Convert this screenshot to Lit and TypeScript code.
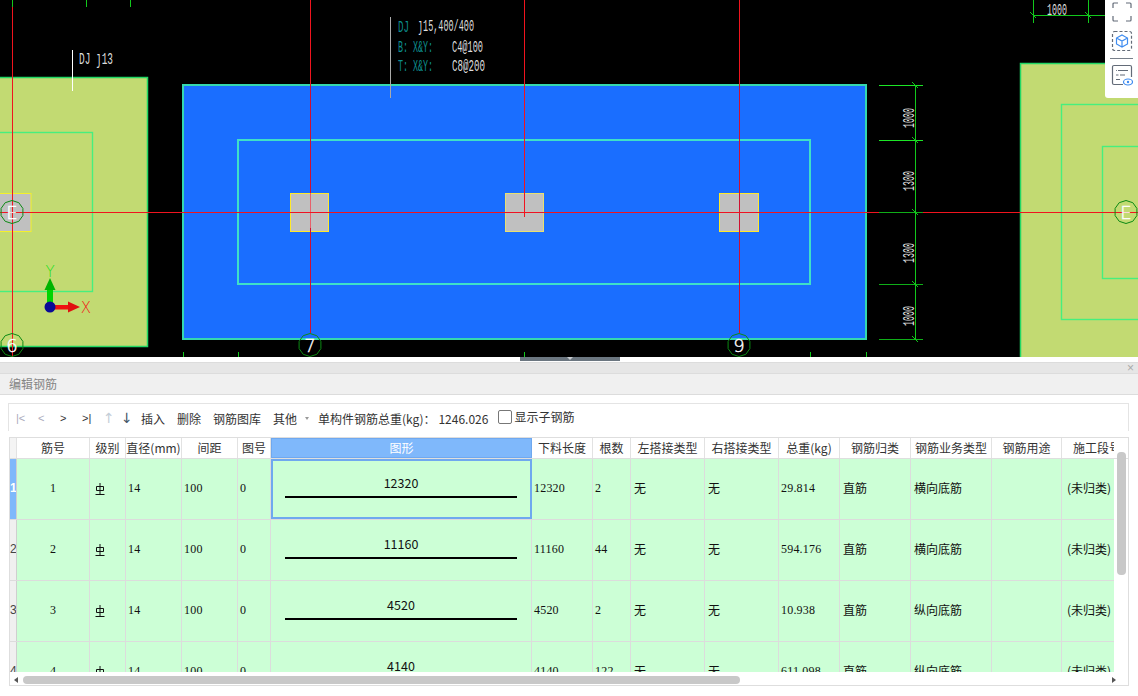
import { LitElement, css, html, svg } from 'lit';
import { customElement } from 'lit/decorators.js';

type Bar = { no: number; len: number; count: number; weight: string; kind: string };

const bars: Bar[] = [
  { no: 1, len: 12320, count: 2, weight: '29.814', kind: '横向底筋' },
  { no: 2, len: 11160, count: 44, weight: '594.176', kind: '横向底筋' },
  { no: 3, len: 4520, count: 2, weight: '10.938', kind: '纵向底筋' },
  { no: 4, len: 4140, count: 122, weight: '611.098', kind: '纵向底筋' },
];

const headers = ['筋号', '级别', '直径(mm)', '间距', '图号', '图形', '下料长度', '根数', '左搭接类型', '右搭接类型', '总重(kg)', '钢筋归类', '钢筋业务类型', '钢筋用途', '施工段号'];

const TEAL = '#0d8f8f';
const PALE = '#ddd';

// axis bubble, the CAD draws it as a coarse polygon
function bubble(cx: number, cy: number, label: string, fs = 18) {
  const pts = Array.from({ length: 10 }, (_, i) => {
    const a = (Math.PI * 2 * i) / 10 - Math.PI / 2;
    return `${(cx + 11.5 * Math.cos(a)).toFixed(1)},${(cy + 11.5 * Math.sin(a)).toFixed(1)}`;
  }).join(' ');
  return svg`<polygon points=${pts} fill="none" stroke="#0c8a14" stroke-width="1"></polygon>
    <text x=${cx} y=${cy + 6.5} text-anchor="middle" font-size=${fs} fill="#fff" stroke="#fff" stroke-width="0.4" class="axis">${label}</text>`;
}

// CAD text is tall and narrow: squeeze the mono font to the width it has in the drawing
function cadText(x: number, y: number, width: number, label: string, fill = PALE) {
  const sx = width / (label.length * 0.6 * 17);
  return svg`<text transform="translate(${x} ${y}) scale(${sx.toFixed(3)} 1)" class="cad" font-size="17" fill=${fill}>${label}</text>`;
}

function dimText(y: number, label: string) {
  const sx = 20 / (label.length * 0.6 * 17);
  return svg`<text transform="translate(914 ${y}) rotate(-90) scale(${sx.toFixed(3)} 1)" text-anchor="middle" font-size="17" fill=${PALE} class="cad">${label}</text>`;
}

function column(x: number, w: number, stroke: string) {
  return svg`<rect x=${x + 0.5} y="193.5" width=${w} height="38" fill="#c0c0c0" stroke=${stroke}></rect>`;
}

// small slash where a witness line meets the dimension line
function tick(x: number, y: number) {
  return svg`<path d="M${x - 3} ${y - 3}L${x + 3} ${y + 3}" stroke="#12c81c" fill="none"></path>`;
}

@customElement('app-root')
export class AppRoot extends LitElement {
  static styles = css`
    :host {
      display: block;
      position: relative;
      width: 1138px;
      height: 696px;
      overflow: hidden;
      background: #fff;
      font-family: 'Noto Sans CJK SC', 'Liberation Sans', sans-serif;
      font-size: 12px;
      color: #333;
    }
    .canvas { display: block; width: 1138px; height: 357px; background: #000; }
    .canvas .cad { font-family: 'Liberation Mono', monospace; }
    .canvas .axis { font-family: 'DejaVu Sans', sans-serif; font-weight: 200; }
    .tools {
      position: absolute;
      top: 0;
      right: 0;
      width: 33px;
      height: 98px;
      box-sizing: border-box;
      background: #fff;
      border-bottom-left-radius: 3px;
      display: flex;
      flex-direction: column;
      align-items: center;
    }
    .tools svg { display: block; width: 22px; height: 22px; }
    .tools .first { margin-top: 1px; }
    .tools .second { margin-top: 7px; }
    .tools hr { width: 23px; height: 1px; border: 0; margin: 6px 0 5px; background: #777f8a; }
    .splitter { height: 4px; display: flex; justify-content: center; padding-left: 2px; }
    .handle {
      width: 100px;
      height: 4px;
      background: #6b7680;
      display: flex;
      justify-content: center;
    }
    .handle i {
      width: 0;
      height: 0;
      border: 3px solid transparent;
      border-top-color: #c8ccd0;
      border-bottom: 0;
    }
    .strip {
      margin-top: 1px;
      height: 10px;
      background: #e6e6e6;
      border-top: 1px solid #dcdcdc;
      border-bottom: 1px solid #dcdcdc;
      display: flex;
      justify-content: flex-end;
      align-items: center;
      padding-right: 4px;
      color: #aaa;
      font: 12px 'Liberation Sans', sans-serif;
    }
    .title {
      height: 20px;
      background: #f0f0f0;
      border-bottom: 1px solid #dcdcdc;
      padding-left: 9px;
      line-height: 19px;
      color: #858585;
    }
    .toolbar {
      margin: 8px 9px 0 8px;
      height: 28px;
      box-sizing: border-box;
      border: 1px solid #e4e4e4;
      border-bottom: 0;
      display: flex;
      align-items: center;
      padding: 1px 0 0 7px;
      white-space: nowrap;
    }
    .toolbar span { flex: none; }
    .nav { width: 22px; font-size: 11px; font-family: 'Liberation Sans', sans-serif; }
    .nav.wide { width: 21px; }
    .off { color: #aab; }
    .arrow { width: 18px; font-size: 14px; font-family: 'DejaVu Sans', sans-serif; color: #456; }
    .arrow.short { width: 20px; }
    .arrow.off { color: #c5ced8; }
    .act { margin-right: 12px; }
    .caret {
      width: 0;
      height: 0;
      margin: 1px 9px 0 -4px;
      border: 2.5px solid transparent;
      border-top: 3px solid #999;
      border-bottom: 0;
    }
    .weight { margin: 0 10px 0 3px; }
    .check {
      width: 12px;
      height: 12px;
      margin: -3px 2px 0 0;
      border: 1px solid #777;
      border-radius: 2px;
      background: #fff;
    }
    .toggle { margin-top: -3px; }
    .table {
      position: relative;
      margin: 6px 9px 0 9px;
      height: 249px;
      box-sizing: border-box;
      border: 1px solid #dedede;
      overflow: hidden;
    }
    .row {
      display: grid;
      grid-template-columns: 7px 73px 36px 56px 56px 33px 261px 61px 38px 74px 74px 61px 71px 81px 70px 52px;
    }
    .head { height: 20px; border-bottom: 1px solid #dedede; box-sizing: content-box; background: #fff; }
    .head > div {
      border-right: 1px solid #e2e2e2;
      text-align: center;
      line-height: 20px;
      white-space: nowrap;
      overflow: hidden;
    }
    .head .last { text-align: left; padding-left: 11px; border: 0; }
    .head .stub { background: #f4f4f4; }
    .head .picked { background: #7fb8fb; color: #fff; border: 0; box-shadow: inset 0 0 0 1px #6fa8ef; }
    .rows { width: 1104px; height: 213px; overflow: hidden; }
    .data { height: 60px; border-bottom: 1px solid #dcdcdc; background: #ccffd6; color: #111; }
    .data > div {
      border-right: 1px solid #dcdcdc;
      line-height: 58px;
      padding-left: 3px;
      white-space: nowrap;
      overflow: hidden;
    }
    .data .num { font-family: 'Liberation Serif', serif; padding-left: 2px; letter-spacing: 0.2px; }
    .data .mid { text-align: center; padding: 0; }
    .data .gap { padding-left: 5px; }
    .data .end { border-right: 0; }
    .data .stub {
      background: #f0f0f0;
      color: #444;
      padding: 0;
      text-align: center;
      font-family: 'Liberation Sans', sans-serif;
      border-right: 1px solid #cfcfcf;
    }
    .data .stub.on { background: #7fb8fb; color: #fff; font-weight: bold; }
    .data .grade { display: flex; align-items: center; padding-left: 5px; height: 60px; box-sizing: border-box; }
    .grade svg { display: block; width: 10px; height: 12px; }
    .data .shape {
      display: flex;
      flex-direction: column;
      align-items: center;
      padding: 14px 0 0;
      box-sizing: border-box;
      line-height: 20px;
      font-size: 12.5px;
    }
    .shape b { display: block; width: 232px; height: 2px; margin-top: 3px; background: #000; }
    .data .shape.on { outline: 2px solid #6fa8ef; outline-offset: -2px; }
    .hbar { display: flex; align-items: center; height: 14px; padding-top: 1px; box-sizing: border-box; }
    .tri-l, .tri-r { width: 0; height: 0; border: 3.5px solid transparent; }
    .tri-l { margin-left: 4px; border-left: 0; border-right: 4px solid #555; }
    .tri-r { margin-left: 372px; border-right: 0; border-left: 4px solid #555; }
    .thumb { width: 717px; height: 8px; margin-left: 5px; border-radius: 4px; background: #c8c8c8; }
    .vbar {
      position: absolute;
      left: 1107px;
      top: 14px;
      width: 9px;
      height: 123px;
      border-radius: 4px;
      background: #c8c8c8;
    }
  `;

  private renderCanvas() {
    return html`<svg class="canvas" viewBox="0 0 1138 357">
      <!-- left footing -->
      <rect x="-5" y="77.5" width="152.5" height="269" fill="#c2da72" stroke="#22d765" stroke-width="1.5"></rect>
      <rect x="-5" y="132.5" width="97.5" height="159" fill="none" stroke="#46ef7e" stroke-width="1.4"></rect>
      <rect x="-5" y="193.5" width="36" height="38" fill="#c0c0c0" stroke="#f4f02a"></rect>
      <!-- middle footing -->
      <rect x="183" y="85" width="683" height="254" fill="#1a6eff" stroke="#35d8ae" stroke-width="2"></rect>
      <rect x="238" y="140" width="572" height="144" fill="none" stroke="#3fe0c8" stroke-width="2"></rect>
      ${column(290, 38, '#ffe92a')}${column(505, 38, '#e8e070')}${column(719, 39, '#ffe92a')}
      <!-- right footing -->
      <rect x="1020.5" y="63.5" width="130" height="300" fill="#c2da72" stroke="#22d765" stroke-width="1.5"></rect>
      <rect x="1061.5" y="104.5" width="90" height="215" fill="none" stroke="#46ef7e" stroke-width="1.4"></rect>
      <rect x="1102.5" y="146.5" width="60" height="132" fill="none" stroke="#46ef7e" stroke-width="1.4"></rect>
      <!-- axes -->
      <g stroke="#f0141e" stroke-width="1" shape-rendering="crispEdges">
        <line x1="12.5" y1="7" x2="12.5" y2="357"></line>
        <line x1="310.5" y1="0" x2="310.5" y2="333" stroke="#d01030"></line>
        <line x1="310.5" y1="193" x2="310.5" y2="228" stroke="#e8606a"></line>
        <line x1="524.5" y1="0" x2="524.5" y2="217"></line>
        <line x1="739.5" y1="0" x2="739.5" y2="333" stroke="#d01030"></line>
        <line x1="739.5" y1="0" x2="739.5" y2="85"></line>
        <line x1="310.5" y1="0" x2="310.5" y2="85"></line>
        <line x1="0" y1="212.5" x2="1138" y2="212.5"></line>
      </g>
      ${bubble(12, 212, 'E')}${bubble(12, 345, '6')}${bubble(310, 345, '7')}${bubble(739, 345, '9')}${bubble(1126, 212, 'E')}
      <!-- dimension chain -->
      <g stroke="#12c81c" stroke-width="1" shape-rendering="crispEdges">
        <line x1="915.5" y1="85" x2="915.5" y2="339"></line>
        <line x1="879" y1="85.5" x2="923" y2="85.5" stroke="#1ce626"></line>
        <line x1="879" y1="140.5" x2="923" y2="140.5" stroke="#1ce626"></line>
        <line x1="879" y1="212.5" x2="923" y2="212.5" stroke="#0fae18"></line>
        <line x1="879" y1="284.5" x2="923" y2="284.5" stroke="#0fae18"></line>
        <line x1="879" y1="339.5" x2="923" y2="339.5" stroke="#0fae18"></line>
        <line x1="1033" y1="15.5" x2="1105" y2="15.5"></line>
        <line x1="1033.5" y1="0" x2="1033.5" y2="23"></line>
        <line x1="1088.5" y1="0" x2="1088.5" y2="23"></line>
        <line x1="12.5" y1="0" x2="12.5" y2="7"></line>
        <line x1="86.5" y1="0" x2="86.5" y2="7"></line>
        <line x1="130.5" y1="0" x2="130.5" y2="7"></line>
        <line x1="183.5" y1="352" x2="183.5" y2="357"></line>
        <line x1="238.5" y1="352" x2="238.5" y2="357"></line>
        <line x1="524.5" y1="352" x2="524.5" y2="357"></line>
        <line x1="810.5" y1="352" x2="810.5" y2="357"></line>
        <line x1="866.5" y1="352" x2="866.5" y2="357"></line>
      </g>
      ${tick(915, 85)}${tick(915, 140)}${tick(915, 212)}${tick(915, 284)}${tick(915, 339)}${tick(1033, 15)}${tick(1088, 15)}
      ${dimText(118, '1000')}${dimText(181, '1300')}${dimText(253, '1300')}${dimText(316, '1000')}
      ${cadText(1047, 15, 20, '1000')}
      <!-- labels -->
      <line x1="72.5" y1="50" x2="72.5" y2="91" stroke="#fff"></line>
      ${cadText(79, 64, 34, 'DJ ȷ13')}
      <line x1="390.5" y1="17" x2="390.5" y2="98" stroke="#aaa"></line>
      ${cadText(398, 32, 11, 'DJ', TEAL)}
      ${cadText(418, 31, 56, 'ȷ15,400/400')}
      ${cadText(398, 52, 35, 'B: X&Y:', TEAL)}
      ${cadText(452, 52, 31, 'C4@100')}
      ${cadText(398, 71, 35, 'T: X&Y:', TEAL)}
      ${cadText(452, 71, 33, 'C8@200')}
      <!-- coordinate gizmo -->
      <rect x="47" y="289" width="6" height="18" fill="#00d400"></rect>
      <polygon points="50,278 55.5,290 44.5,290" fill="#00b400"></polygon>
      <rect x="50" y="305" width="19" height="4.5" fill="#f01010"></rect>
      <polygon points="80,307 68,301.5 68,312.5" fill="#e01010"></polygon>
      <circle cx="50" cy="307" r="5.5" fill="#0a0a96"></circle>
      <text x="50" y="277" text-anchor="middle" font-size="15" fill="#22e022" class="axis">Y</text>
      <text x="86" y="313" text-anchor="middle" font-size="15" fill="#f01818" class="axis">X</text>
    </svg>`;
  }

  private renderTools() {
    return html`<div class="tools">
      <svg class="first" viewBox="0 0 22 22" fill="none" stroke="#636b78" stroke-width="1.2">
        <path d="M2 7V3a1 1 0 0 1 1-1h4M15 2h4a1 1 0 0 1 1 1v4M20 15v4a1 1 0 0 1-1 1h-4M7 20H3a1 1 0 0 1-1-1v-4"></path>
      </svg>
      <svg class="second" viewBox="0 0 22 22" fill="none" stroke-width="1.2">
        <rect x="1.5" y="1.5" width="19" height="19" rx="2" stroke="#636b78" stroke-dasharray="3 2"></rect>
        <path d="M11 5l5.5 3v6L11 17l-5.5-3V8zM5.5 8l5.5 3 5.5-3M11 11v6" stroke="#3f8cf0"></path>
      </svg>
      <hr />
      <svg viewBox="0 0 22 22" fill="none" stroke="#636b78" stroke-width="1.2">
        <path d="M12 20.5H3a1.5 1.5 0 0 1-1.5-1.5V3A1.5 1.5 0 0 1 3 1.5h16A1.5 1.5 0 0 1 20.5 3v10"></path>
        <path d="M7 6.5h10M5 6.5h.8M9 11h5M5 11h2.500M5 15.500h4"></path>
        <ellipse cx="17" cy="18" rx="4.5" ry="3" stroke="#3f8cf0"></ellipse>
        <circle cx="17" cy="18" r="1.2" fill="#3f8cf0" stroke="none"></circle>
      </svg>
    </div>`;
  }

  private renderRow(b: Bar, first: boolean) {
    return html`<div class="row data">
      <div class="stub ${first ? 'on' : ''}">${b.no}</div>
      <div class="num mid">${b.no}</div>
      <div class="grade">
        <svg viewBox="0 0 10 12" fill="none" stroke="#111" stroke-width="1">
          <path d="M5 0v11.5M.5 11.5h9M1.5 3.5h7v4h-7z"></path>
        </svg>
      </div>
      <div class="num">14</div>
      <div class="num">100</div>
      <div class="num">0</div>
      <div class="shape ${first ? 'on' : ''}">${b.len}<b></b></div>
      <div class="num">${b.len}</div>
      <div class="num">${b.count}</div>
      <div>无</div>
      <div>无</div>
      <div class="num">${b.weight}</div>
      <div>直筋</div>
      <div>${b.kind}</div>
      <div></div>
      <div class="gap end">(未归类)</div>
    </div>`;
  }

  render() {
    return html`
      ${this.renderCanvas()}${this.renderTools()}
      <div class="splitter"><div class="handle"><i></i></div></div>
      <div class="strip">×</div>
      <div class="title">编辑钢筋</div>
      <div class="toolbar">
        <span class="nav off">|&lt;</span>
        <span class="nav off">&lt;</span>
        <span class="nav">&gt;</span>
        <span class="nav wide">&gt;|</span>
        <span class="arrow off">↑</span>
        <span class="arrow short">↓</span>
        <span class="act">插入</span>
        <span class="act">删除</span>
        <span class="act">钢筋图库</span>
        <span class="act">其他</span>
        <span class="caret"></span>
        <span>单构件钢筋总重(kg)：</span>
        <span class="weight">1246.026</span>
        <span class="check"></span>
        <span class="toggle">显示子钢筋</span>
      </div>
      <div class="table">
        <div class="row head">
          <div class="stub"></div>
          ${headers.map(
            (h) => html`<div class=${h === '图形' ? 'picked' : h === '施工段号' ? 'last' : ''}>${h}</div>`,
          )}
        </div>
        <div class="rows">${bars.map((b, i) => this.renderRow(b, i === 0))}</div>
        <div class="hbar"><i class="tri-l"></i><div class="thumb"></div><i class="tri-r"></i></div>
        <div class="vbar"></div>
      </div>
    `;
  }
}
